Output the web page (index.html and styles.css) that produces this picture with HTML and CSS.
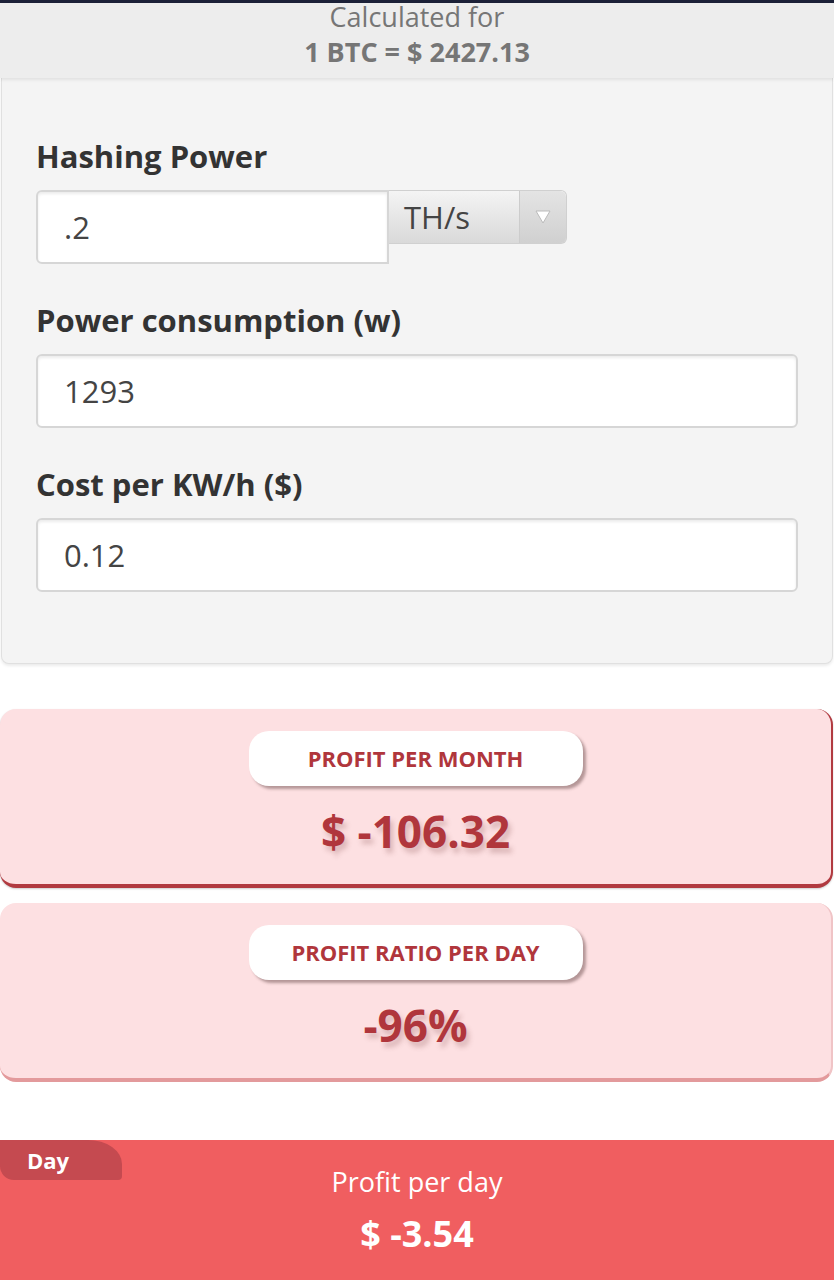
FILE: index.html
```html
<!DOCTYPE html>
<html lang="en">
<head>
  <meta charset="UTF-8" />
  <meta name="viewport" content="width=device-width, initial-scale=1.0"/>
  <title>Mining Calculator</title>
  <link rel="stylesheet" href="styles.css">
</head>
<body>

  <div class="topline"></div>

  <div class="rate">
    <div class="rate-label">Calculated for</div>
    <div class="rate-value">1 BTC = $ 2427.13</div>
  </div>

  <div class="form">
    <label class="label">Hashing Power</label>
    <div class="hash-row">
      <input type="text" class="field field-hash" value=".2">
      <div class="select">
        <span class="select-text">TH/s</span>
        <span class="select-arrow">
          <svg width="16" height="14" viewBox="0 0 16 14"><path d="M1 1 L15 1 L8 13 Z" fill="#fff" stroke="#bbb" stroke-width="1"/></svg>
        </span>
      </div>
    </div>

    <label class="label">Power consumption (w)</label>
    <input type="text" class="field" value="1293">

    <label class="label">Cost per KW/h ($)</label>
    <input type="text" class="field field-last" value="0.12">
  </div>

  <div class="cards">
    <div class="card card-month">
      <div class="pill">PROFIT PER MONTH</div>
      <div class="amount">$ -106.32</div>
    </div>

    <div class="card card-ratio">
      <div class="pill">PROFIT RATIO PER DAY</div>
      <div class="amount">-96%</div>
    </div>
  </div>

  <div class="day">
    <span class="day-tag">Day</span>
    <div class="day-label">Profit per day</div>
    <div class="day-value">$ -3.54</div>
  </div>

</body>
</html>
```

FILE: styles.css
```css
body {
  font-family: "Open Sans", Arial, sans-serif;
  background-color: #fff;
  margin: 0;
  padding: 0;
  color: #333;
  overflow: hidden;
}

.topline {
  height: 3px;
  background-color: #1c2138;
}

.rate {
  background-color: #ededed;
  text-align: center;
  color: #767676;
  height: 75px;
  box-shadow: 0 2px 3px rgba(0,0,0,0.08);
  position: relative;
}

.rate-label {
  font-size: 27px;
  line-height: 28px;
}

.rate-value {
  font-size: 27px;
  font-weight: bold;
  line-height: 30px;
  margin-top: 6px;
}

.form {
  background-color: #f4f4f4;
  margin: 0 1px;
  padding: 60px 34px 71px 34px;
  border: 1px solid #e0e0e0;
  border-top: none;
  border-radius: 0 0 8px 8px;
  box-shadow: 0 2px 3px rgba(0,0,0,0.08);
}

.label {
  display: block;
  font-size: 31px;
  font-weight: bold;
  color: #333;
  line-height: 36px;
  margin-bottom: 16px;
}

.field {
  display: block;
  box-sizing: border-box;
  width: 100%;
  height: 74px;
  padding: 0 26px;
  font-family: "Open Sans", Arial, sans-serif;
  font-size: 31px;
  color: #444;
  background-color: #fff;
  border: 2px solid #d6d6d6;
  border-radius: 6px;
  box-shadow: inset 0 2px 3px rgba(0,0,0,0.08);
  margin-bottom: 38px;
  outline: none;
}

.field-last {
  margin-bottom: 0;
}

.hash-row {
  display: flex;
  align-items: flex-start;
  margin-bottom: 38px;
}

.field-hash {
  width: 353px;
  margin-bottom: 0;
  border-radius: 6px 0 0 6px;
}

.select {
  display: flex;
  height: 54px;
  width: 178px;
  border: 1px solid #d0d0d0;
  border-left: none;
  border-radius: 0 6px 6px 0;
  background: linear-gradient(#f4f4f4, #d9d9d9);
  box-sizing: border-box;
}

.select-text {
  flex: 1;
  font-size: 31px;
  color: #444;
  padding-left: 15px;
  line-height: 52px;
}

.select-arrow {
  width: 46px;
  display: flex;
  align-items: center;
  justify-content: center;
  background: linear-gradient(#e4e4e4, #d0d0d0);
  border-left: 1px solid #ccc;
  border-radius: 0 6px 6px 0;
}

.cards {
  margin-top: 45px;
}

.card {
  background-color: #fde0e2;
  border-radius: 16px;
  text-align: center;
  padding: 22px 0 28px 0;
  margin-right: 1px;
  margin-bottom: 15px;
}

.card-month {
  border-bottom: 4px solid #b13a40;
  border-right: 2px solid #b13a40;
  box-shadow: 0 1px 2px rgba(0,0,0,0.2);
}

.card-ratio {
  border-bottom: 4px solid #e39a9c;
  border-right: 2px solid #f0c4c6;
  margin-bottom: 0;
}

.pill {
  display: inline-block;
  width: 334px;
  height: 55px;
  line-height: 55px;
  background-color: #fff;
  border-radius: 20px;
  color: #b0363c;
  font-size: 22px;
  font-weight: bold;
  box-shadow: 3px 3px 3px rgba(90,60,60,0.45);
}

.amount {
  color: #b0363c;
  font-size: 44px;
  font-weight: bold;
  line-height: 50px;
  margin-top: 20px;
  text-shadow: 3px 5px 5px rgba(120,60,60,0.25);
}

.day {
  margin-top: 58px;
  background-color: #f05e60;
  color: #fff;
  text-align: center;
  height: 160px;
  position: relative;
}

.day-tag {
  position: absolute;
  left: 0;
  top: 0;
  width: 122px;
  height: 40px;
  line-height: 40px;
  background-color: #c54a50;
  border-radius: 0 34px 4px 14px / 0 24px 4px 14px;
  font-size: 22px;
  font-weight: bold;
  text-align: left;
  padding-left: 27px;
  box-sizing: border-box;
}

.day-label {
  padding-top: 24px;
  font-size: 27px;
  line-height: 36px;
}

.day-value {
  font-size: 36px;
  font-weight: bold;
  line-height: 44px;
  margin-top: 12px;
}
```
